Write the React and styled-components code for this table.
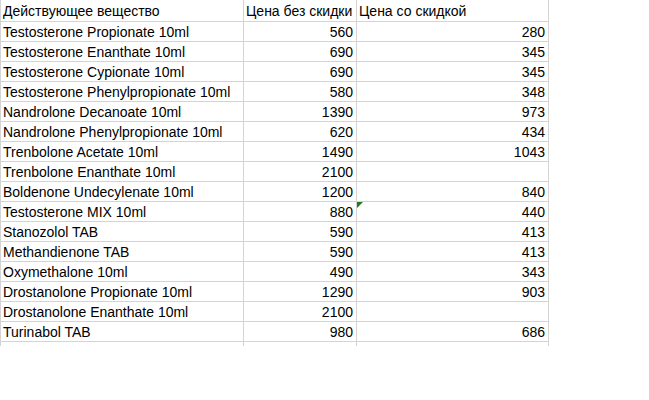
import React from "react";
import styled, { createGlobalStyle } from "styled-components";

const GlobalStyle = createGlobalStyle`
  body {
    margin: 0;
    background: #ffffff;
  }
`;

const Sheet = styled.div`
  display: grid;
  grid-template-columns: 243px 113px 192px;
  width: 549px;
  border-left: 1px solid #d4d4d4;
  font-family: "Liberation Sans", Arial, sans-serif;
  font-size: 14px;
  color: #000;
`;

const Cell = styled.div`
  position: relative;
  box-sizing: border-box;
  height: ${(p) => (p.head ? 22 : 20)}px;
  padding: 0 ${(p) => (p.num ? 3 : 2)}px 0 2px;
  border-right: 1px solid #d4d4d4;
  border-bottom: 1px solid #d4d4d4;
  text-align: ${(p) => (p.num ? "right" : "left")};
  line-height: ${(p) => (p.head ? 22 : 20)}px;
  white-space: nowrap;
  overflow: visible;
`;

const Stub = styled.div`
  height: 4px;
  border-right: 1px solid #d4d4d4;
`;

const Flag = styled.span`
  position: absolute;
  left: 0;
  top: 0;
  width: 0;
  height: 0;
  border-top: 6px solid #1f7a1f;
  border-right: 6px solid transparent;
`;

const rows = [
  ["Testosterone Propionate 10ml", 560, 280],
  ["Testosterone Enanthate 10ml", 690, 345],
  ["Testosterone Cypionate 10ml", 690, 345],
  ["Testosterone Phenylpropionate 10ml", 580, 348],
  ["Nandrolone Decanoate 10ml", 1390, 973],
  ["Nandrolone Phenylpropionate 10ml", 620, 434],
  ["Trenbolone Acetate 10ml", 1490, 1043],
  ["Trenbolone Enanthate 10ml", 2100, ""],
  ["Boldenone Undecylenate 10ml", 1200, 840],
  ["Testosterone MIX 10ml", 880, 440, true],
  ["Stanozolol TAB", 590, 413],
  ["Methandienone TAB", 590, 413],
  ["Oxymethalone 10ml", 490, 343],
  ["Drostanolone Propionate 10ml", 1290, 903],
  ["Drostanolone Enanthate 10ml", 2100, ""],
  ["Turinabol TAB", 980, 686],
];

const App = () => {
  return (
    <>
      <GlobalStyle />
      <Sheet>
        <Cell head>Действующее вещество</Cell>
        <Cell head>Цена без скидки</Cell>
        <Cell head>Цена со скидкой</Cell>
        {rows.map(([name, price, sale, flag]) => (
          <React.Fragment key={name}>
            <Cell>{name}</Cell>
            <Cell num>{price}</Cell>
            <Cell num>
              {flag && <Flag />}
              {sale}
            </Cell>
          </React.Fragment>
        ))}
        <Stub />
        <Stub />
        <Stub />
      </Sheet>
    </>
  );
};

export default App;
